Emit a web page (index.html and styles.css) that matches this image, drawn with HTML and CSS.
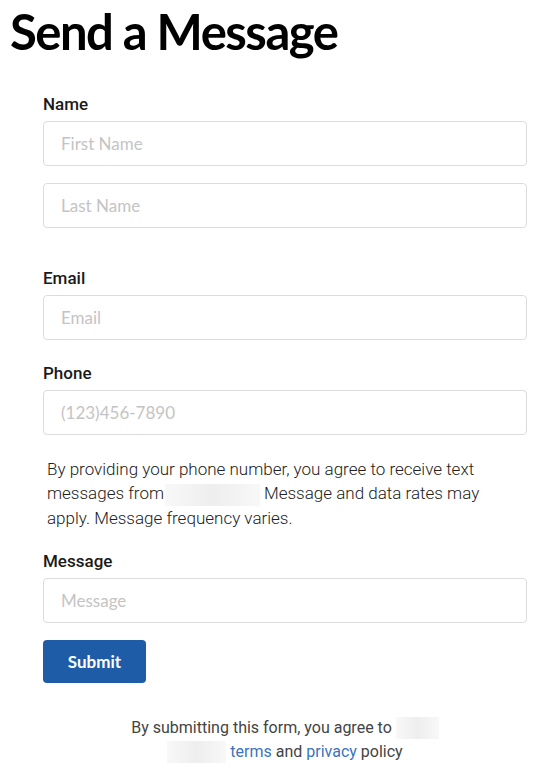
FILE: index.html
```html
<!DOCTYPE html>
<html lang="en">
<head>
    <meta charset="UTF-8">
    <meta name="viewport" content="width=device-width, initial-scale=1.0">
    <title>Send a Message</title>
    <link rel="stylesheet" href="styles.css">
</head>
<body>
    <h1 class="page-title">Send a Message</h1>

    <form class="contact-form" onsubmit="return false;">
        <!-- Name -->
        <div class="field field-name">
            <label class="field-label" for="firstName">Name</label>
            <input class="field-input" type="text" id="firstName" placeholder="First Name">
            <input class="field-input" type="text" id="lastName" placeholder="Last Name">
        </div>

        <!-- Email -->
        <div class="field field-email">
            <label class="field-label" for="email">Email</label>
            <input class="field-input" type="email" id="email" placeholder="Email">
        </div>

        <!-- Phone -->
        <div class="field field-phone">
            <label class="field-label" for="phone">Phone</label>
            <input class="field-input" type="tel" id="phone" placeholder="(123)456-7890">
        </div>

        <p class="sms-note">
            By providing your phone number, you agree to receive text messages from<span class="redacted redacted-long"></span>Message and data rates may apply. Message frequency varies.
        </p>

        <!-- Message -->
        <div class="field field-message">
            <label class="field-label" for="message">Message</label>
            <input class="field-input" type="text" id="message" placeholder="Message">
        </div>

        <div class="actions">
            <button class="submit-btn" type="submit">Submit</button>
        </div>

        <p class="legal">
            By submitting this form, you agree to <span class="redacted redacted-short"></span><br>
            <span class="redacted redacted-mid"></span> <a href="#">terms</a> and <a href="#">privacy</a> policy
        </p>
    </form>
</body>
</html>
```

FILE: styles.css
```css
/* Basic Styles */
body {
    margin: 0;
    background-color: #ffffff;
    font-family: Roboto, "Liberation Sans", sans-serif;
    color: #111;
}

.page-title {
    margin: 0;
    padding: 2px 0 0 10px;
    font-family: Lato, "Open Sans", sans-serif;
    font-weight: 700;
    font-size: 49px;
    line-height: 58px;
    letter-spacing: -1.5px;
    color: #000;
}

/* Form */
.contact-form {
    padding: 0 13px 20px 43px;
}

.field {
    display: flex;
    flex-direction: column;
    gap: 17px;
}

.field-name {
    margin-top: 34px;
}

.field-email {
    margin-top: 40px;
}

.field-phone {
    margin-top: 23px;
}

.field-message {
    margin-top: 21px;
}

.field-label {
    font-weight: 500;
    font-size: 17px;
    line-height: 20px;
    color: #1a1a1a;
    margin-bottom: -10px;
}

.field-input {
    box-sizing: border-box;
    width: 100%;
    height: 45px;
    padding: 0 17px;
    border: 1px solid #dcdcdc;
    border-radius: 4px;
    font-family: Lato, sans-serif;
    font-size: 17px;
    color: #333;
    background: #fff;
    outline: none;
}

.field-input::placeholder {
    color: #c4c4c4;
}

/* SMS note */
.sms-note {
    margin: 22px 12px 0 4px;
    font-weight: 300;
    font-size: 17px;
    line-height: 24px;
    color: #222;
}

.redacted {
    display: inline-block;
    vertical-align: middle;
    height: 22px;
    background: linear-gradient(90deg, #f8f8f8, #eeeeee 50%, #f8f8f8);
}

.redacted-long {
    width: 95px;
    margin: 0 4px 0 1px;
}

.redacted-short {
    width: 43px;
}

.redacted-mid {
    width: 59px;
}

/* Button */
.actions {
    margin-top: 17px;
}

.submit-btn {
    display: block;
    width: 103px;
    height: 43px;
    border: none;
    border-radius: 4px;
    background-color: #1f5ca8;
    color: #fff;
    font-family: Lato, sans-serif;
    font-weight: 700;
    font-size: 17px;
    cursor: pointer;
}

/* Legal */
.legal {
    margin: 33px 0 0;
    text-align: center;
    font-size: 16px;
    line-height: 24px;
    color: #444;
}

.legal a {
    color: #3d73bd;
    text-decoration: none;
}
```
